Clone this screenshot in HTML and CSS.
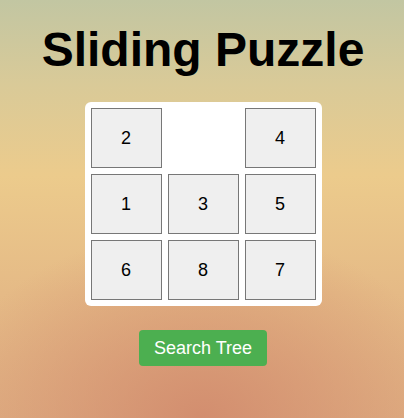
FILE: index.html
```html
<!DOCTYPE html>
<html lang="en">
<head>
<meta charset="utf-8">
<title>Sliding Puzzle</title>
<link rel="stylesheet" href="styles.css">
</head>
<body>
<main class="app">
  <h1 class="title">Sliding Puzzle</h1>
  <div class="board">
    <div class="tile">2</div>
    <div class="tile empty"></div>
    <div class="tile">4</div>
    <div class="tile">1</div>
    <div class="tile">3</div>
    <div class="tile">5</div>
    <div class="tile">6</div>
    <div class="tile">8</div>
    <div class="tile">7</div>
  </div>
  <button class="search-btn" type="button">Search Tree</button>
</main>
</body>
</html>
```
FILE: styles.css
```css
html, body {
  margin: 0;
  height: 100%;
}
body {
  font-family: "Liberation Sans", Arial, sans-serif;
  background:
    radial-gradient(ellipse 260px 190px at 50% 100%, rgba(210, 140, 110, 0.95), rgba(210, 140, 110, 0) 100%),
    linear-gradient(to bottom, #c2c6a2 0%, #d9ca98 20%, #eccb8c 42%, #e5ba86 70%, #dfae82 100%);
  overflow: hidden;
}
.app {
  display: flex;
  flex-direction: column;
  align-items: center;
  padding-top: 22px;
  padding-left: 2px;
}
.title {
  margin: 0;
  font-size: 48px;
  font-weight: bold;
  color: #000;
  line-height: 55px;
}
.board {
  margin-top: 25px;
  background: #fff;
  border-radius: 6px;
  padding: 6px;
  display: grid;
  grid-template-columns: repeat(3, 71px);
  grid-template-rows: repeat(3, 60px);
  gap: 6px;
}
.tile {
  box-sizing: border-box;
  background: #efefef;
  border: 1px solid #777;
  display: flex;
  align-items: center;
  justify-content: center;
  font-size: 18px;
  color: #000;
}
.tile.empty {
  background: transparent;
  border: none;
}
.search-btn {
  margin-top: 24px;
  width: 128px;
  height: 36px;
  background: #4caf50;
  color: #fff;
  border: none;
  border-radius: 4px;
  font-family: "Liberation Sans", Arial, sans-serif;
  font-size: 18px;
  padding: 0;
}
```
